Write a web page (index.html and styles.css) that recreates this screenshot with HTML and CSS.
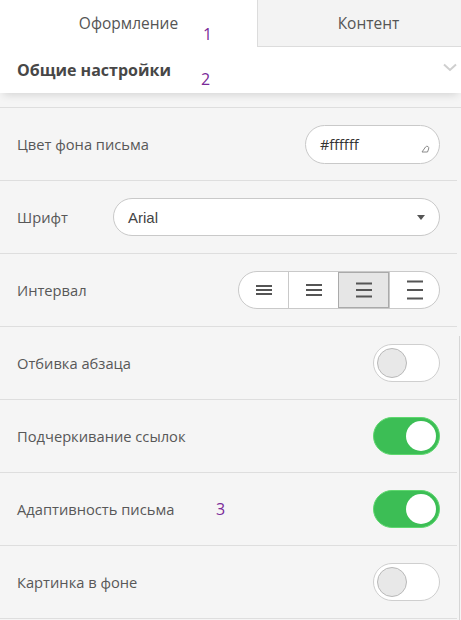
FILE: index.html
```html
<!DOCTYPE html>
<html lang="ru">
<head>
<meta charset="utf-8">
<link rel="stylesheet" href="styles.css">
</head>
<body>
<div class="panel">
  <div class="tabs">
    <div class="tab active">Оформление<span class="mark mark1">1</span></div>
    <div class="tab">Контент</div>
  </div>
  <div class="section-head">
    <span class="section-title">Общие настройки</span>
    <span class="mark mark2">2</span>
    <svg class="chev" width="14" height="9" viewBox="0 0 14 9"><path d="M1 1.5 L7 7 L13 1.5" fill="none" stroke="#cfcfcf" stroke-width="2"/></svg>
  </div>
  <div class="gap"></div>
  <div class="rows">
    <div class="row">
      <span class="label">Цвет фона письма</span>
      <div class="color-input">#ffffff
        <svg class="grip" width="9" height="8" viewBox="0 0 9 8"><path d="M1 7 L4.5 2 Q5.5 0.8 7 1.5 Q8.2 2.5 7.6 4 L6.5 7 Z" fill="none" stroke="#8a8a8a" stroke-width="1"/></svg>
      </div>
    </div>
    <div class="row">
      <span class="label">Шрифт</span>
      <div class="select">Arial<span class="caret"></span></div>
    </div>
    <div class="row">
      <span class="label">Интервал</span>
      <div class="seg">
        <div class="seg-btn"><svg width="16" height="20" viewBox="0 0 16 20"><path d="M0 6h16M0 10h16M0 14h16" stroke="#555" stroke-width="2"/></svg></div>
        <div class="seg-btn"><svg width="16" height="20" viewBox="0 0 16 20"><path d="M0 5h16M0 10h16M0 15h16" stroke="#555" stroke-width="2"/></svg></div>
        <div class="seg-btn on"><svg width="16" height="20" viewBox="0 0 16 20"><path d="M0 3.5h16M0 10h16M0 16.5h16" stroke="#555" stroke-width="1.8"/></svg></div>
        <div class="seg-btn"><svg width="16" height="20" viewBox="0 0 16 20"><path d="M0 1.5h16M0 10h16M0 18.5h16" stroke="#555" stroke-width="1.8"/></svg></div>
      </div>
    </div>
    <div class="row">
      <span class="label">Отбивка абзаца</span>
      <div class="toggle"><span class="knob"></span></div>
    </div>
    <div class="row">
      <span class="label">Подчеркивание ссылок</span>
      <div class="toggle checked"><span class="knob"></span></div>
    </div>
    <div class="row">
      <span class="label">Адаптивность письма</span>
      <span class="mark mark3">3</span>
      <div class="toggle checked"><span class="knob"></span></div>
    </div>
    <div class="row">
      <span class="label">Картинка в фоне</span>
      <div class="toggle"><span class="knob"></span></div>
    </div>
  </div>
  <div class="scroll-edge"></div>
</div>
</body>
</html>
```
FILE: styles.css
```css
* { box-sizing: border-box; }
html, body { margin: 0; padding: 0; }
body {
  background: #f5f5f5;
  font-family: "Open Sans", "Noto Sans", sans-serif;
  color: #555;
  width: 461px;
  height: 620px;
  overflow: hidden;
}
.panel { position: relative; }
.tabs { display: flex; height: 47px; background: #fff; }
.tab {
  position: relative;
  display: flex; align-items: center; justify-content: center;
  font-size: 15.5px; color: #555;
  padding-bottom: 1px;
}
.tab.active { width: 257px; background: #fff; }
.tab:not(.active) {
  flex: 1;
  padding-left: 18px;
  background: #f3f3f3;
  border-left: 1px solid #dcdcdc;
  border-bottom: 1px solid #dcdcdc;
}
.mark {
  position: absolute;
  color: #7a2a99;
  font-family: "Open Sans", sans-serif;
  font-size: 16px;
  line-height: 1;
}
.mark1 { left: 203px; top: 26px; }
.mark2 { left: 201px; top: 24px; }
.mark3 { left: 216px; top: 28px; }
.section-head {
  position: relative;
  z-index: 2;
  height: 46px;
  background: #fff;
  display: flex; align-items: center;
  padding: 0 17px;
  box-shadow: 0 5px 8px -3px rgba(0,0,0,0.13);
}
.section-title { font-weight: 700; font-size: 16px; color: #474747; }
.chev { margin-left: auto; margin-right: -13px; margin-top: -5px; }
.gap { height: 14px; }
.rows { border-top: 1px solid #dedede; }
.row {
  position: relative;
  height: 73px;
  display: flex; align-items: center;
  padding: 0 17px 0 17px;
  border-bottom: 1px solid #dedede;
  margin-right: 4px;
}
.label { font-size: 14.7px; color: #585858; }
.color-input {
  position: relative;
  margin-left: auto;
  width: 135px; height: 39px;
  border: 1px solid #c9c9c9;
  border-radius: 20px;
  background: #fff;
  display: flex; align-items: center;
  padding-left: 14px;
  font-size: 14.5px; color: #333;
}
.grip { position: absolute; right: 9px; bottom: 10px; }
.select {
  position: relative;
  margin-left: auto;
  width: 327px; height: 38px;
  border: 1px solid #c9c9c9;
  border-radius: 19px;
  background: #fff;
  display: flex; align-items: center;
  padding-left: 14px;
  font-family: "Liberation Sans", Arial, sans-serif;
  font-size: 15px; color: #444;
}
.caret {
  position: absolute; right: 14px; top: 16px;
  border-left: 4px solid transparent;
  border-right: 4px solid transparent;
  border-top: 5px solid #555;
}
.seg {
  margin-left: auto;
  display: flex;
  width: 202px; height: 38px;
  border: 1px solid #c9c9c9;
  border-radius: 19px;
  background: #fff;
  overflow: hidden;
}
.seg-btn {
  flex: 1;
  display: flex; align-items: center; justify-content: center;
  border-left: 1px solid #c9c9c9;
}
.seg-btn:first-child { border-left: none; }
.seg-btn.on { background: #e6e6e6; border: 1px solid #aaa; }
.toggle {
  margin-left: auto;
  position: relative;
  width: 67px; height: 38px;
  border: 1px solid #cfcfcf;
  border-radius: 19px;
  background: #fff;
}
.knob {
  position: absolute;
  left: 3px; top: 3px;
  width: 30px; height: 30px;
  border-radius: 50%;
  background: #e8e8e8;
  border: 1px solid #b9b9b9;
}
.toggle.checked { background: #3cbe55; border-color: #5fd86f; }
.toggle.checked .knob { left: auto; right: 3px; background: #fff; border: none; }
.scroll-edge {
  position: absolute;
  left: 459px; top: 336px;
  width: 1px; height: 300px;
  background: #d6d6d6;
}
```
